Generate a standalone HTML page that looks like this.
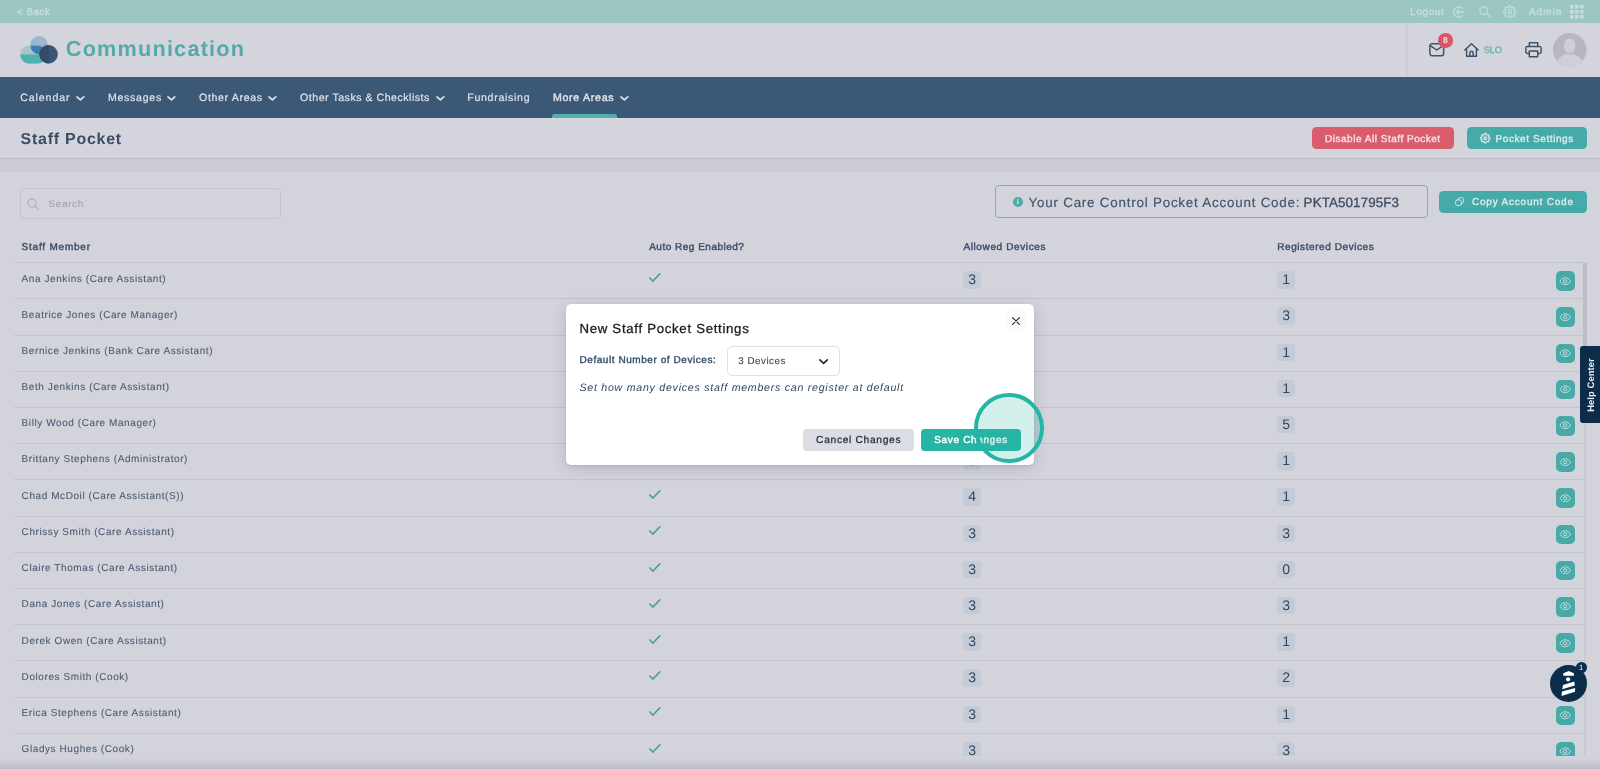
<!DOCTYPE html>
<html lang="en">
<head>
<meta charset="utf-8">
<title>Staff Pocket</title>
<style>
*{box-sizing:border-box;margin:0;padding:0}
html,body{width:1600px;height:769px;overflow:hidden}
body{background:#d3d3dc;font-family:"Liberation Sans",sans-serif;color:#44566b;position:relative;text-rendering:geometricPrecision}
#page{position:absolute;left:0;top:0;width:1600px;height:769px;overflow:hidden;will-change:transform}
.abs{position:absolute}
.t{position:absolute;white-space:nowrap;line-height:1}
svg{position:absolute;overflow:visible}
#topbar{left:0;top:0;width:1600px;height:22.5px;background:#9cc7c1}
#topbar .t{color:#c6dfdb;font-size:10.4px;top:6.2px;-webkit-text-stroke:.4px}
#topbar svg{fill:none;stroke:#c3deda;stroke-width:1.25;stroke-linecap:round;stroke-linejoin:round}
#header{left:0;top:22.5px;width:1600px;height:54.3px;background:#d4d4dc}
#header .sep{left:1406px;top:0;width:1.5px;height:54px;background:#cdcdd6}
#logo-t{left:65.8px;top:15.4px;font-size:22px;font-weight:bold;color:#55aaa8;letter-spacing:.98px}
#nav{left:0;top:76.8px;width:1600px;height:41.2px;background:#3b5876}
#nav .t{color:#dde2ea;font-size:11.6px;top:14.1px;-webkit-text-stroke:.2px}
#nav svg{fill:none;stroke:#dde2ea;stroke-width:1.9;stroke-linecap:round;stroke-linejoin:round;width:8.8px;height:4.7px;top:19.6px}
#nav .ul{left:552px;top:37.5px;width:64.7px;height:3.7px;background:#4fb1ad;border-radius:2.5px 2.5px 0 0}
#titlebar{left:0;top:118px;width:1600px;height:40.5px;background:#d4d4dc;border-bottom:1px solid #bcbcc7;border-top:1px solid #dadae4}
#titlebar h1{left:20.2px;top:11.9px;font-size:17.4px;font-weight:bold;color:#3a4d63}
#band{left:0;top:158.5px;width:1600px;height:13.5px;background:#cbcbd4}
.btn{position:absolute;border-radius:4.5px;height:22.2px}
.btn .t{color:#e6ebef;-webkit-text-stroke:.35px}
.btn svg{fill:none;stroke:#dcebeb;stroke-width:1.1;stroke-linecap:round;stroke-linejoin:round}
.red{background:#da5d6d}
.teal{background:#46aaa9}
.teal .t{color:#d9eeee}
.red .t{color:#f3e3e7}
#content{left:0;top:172px;width:1600px;height:597px;background:#d3d3dc}
#search{left:20px;top:16px;width:261px;height:31px;border:1px solid #c3c3cd;border-radius:4px}
#search .t{left:27px;top:9.5px;font-size:10.8px;color:#9a9ca8}
#search svg{left:6.3px;top:8.8px;width:12.4px;height:12.4px;fill:none;stroke:#aeb0ba;stroke-width:1.3;stroke-linecap:round}
#acct{left:994.5px;top:13.2px;width:433.2px;height:32.6px;border:1px solid #7fb0af;border-radius:4px}
#acct .t{color:#42546a;-webkit-text-stroke:.15px}
#acct .code{color:#3d4d61;-webkit-text-stroke:.3px}
#acct i{position:absolute;left:17.3px;top:10.8px;width:10px;height:10px;border-radius:50%;background:#4daaa8;color:#d8eceb;font:bold 7.5px/10px "Liberation Serif",serif;text-align:center}
.th{position:absolute;white-space:nowrap;line-height:1;top:69px;font-size:10.8px;color:#3f5168;-webkit-text-stroke:.45px}
#tablewrap{left:13.5px;top:172px;width:1573px;height:583.6px;overflow:hidden}
.row{position:absolute;left:0;width:1570px;height:36.2px;border-top:1px solid #c2c3cd}
.row .nm{left:8.1px;font-size:10.0px;letter-spacing:0.58px;color:#4c5c71;-webkit-text-stroke:.1px}
.chk{left:635.8px;top:9.9px;width:11.6px;height:9.6px;fill:none;stroke:#4d9f91;stroke-width:1.7;stroke-linecap:round;stroke-linejoin:round}
.nb{position:absolute;top:8px;width:18.2px;height:17.5px;border-radius:4px;background:#c4cbd7;color:#33475e;font-size:14px;line-height:17.5px;text-align:center}
.eye{position:absolute;left:1542.2px;top:8px;width:19.3px;height:19.7px;border-radius:4.8px;background:#48a9a7;box-shadow:0 0 0 .6px rgba(190,232,232,.55)}
.eye svg{left:3.55px;top:3.6px;width:12.4px;height:12.4px;fill:none;stroke:#bfe4e3;stroke-width:1.25}
#vbar{left:1570px;top:91px;width:2.8px;height:500px;background:#cacad4}
#vthumb{left:1569.9px;top:91px;width:3.3px;height:140px;background:#bcbcca}
#botfade{left:0;top:758px;width:1600px;height:11px;background:linear-gradient(to bottom,rgba(170,170,180,0),rgba(168,168,180,.5))}
#help{left:1580px;top:346px;width:20px;height:76.5px;background:#0b2d4a;border-radius:3px 0 0 3px}
#help .t{left:10.7px;top:38.5px;font-size:9.7px;font-weight:bold;letter-spacing:-.1px;color:#e8ecf0;transform:translate(-50%,-50%) rotate(-90deg)}
#beacon{left:1550px;top:665px;width:36.8px;height:36.8px;border-radius:50%;background:#0b2d4a}
#beacon svg{left:0;top:0;width:36.8px;height:36.8px}
#bbadge{left:1575.6px;top:661.8px;width:11px;height:11px;border-radius:50%;background:#0b2d4a;color:#fff;font-size:7.5px;text-align:center;line-height:11px}
#modal{left:565.8px;top:304px;width:468.5px;height:160.8px;background:#fff;border-radius:5px;box-shadow:0 3px 14px rgba(40,40,52,.17),0 1px 3px rgba(40,40,52,.08)}
#modal h2{left:13.5px;top:16px;font-size:15px;font-weight:normal;color:#1b1b1f;letter-spacing:-.15px;-webkit-text-stroke:.3px}
#modal .lbl{left:13.5px;top:50px;font-size:10.8px;color:#2f4c68;letter-spacing:.18px;-webkit-text-stroke:.35px}
#modal .hint{left:13.5px;top:77.5px;font-size:11.5px;font-style:italic;color:#2f4660;letter-spacing:.33px}
#sel{left:161.2px;top:42.2px;width:113px;height:29.6px;border:1px solid #e0e0e6;border-radius:5px}
#sel .t{color:#3b4757;-webkit-text-stroke:.12px}
#sel svg{left:91.5px;top:11.6px;width:9.2px;height:5.4px;fill:none;stroke:#2c2c2c;stroke-width:1.75;stroke-linecap:round;stroke-linejoin:round}
#xbtn{left:439px;top:5.9px;width:22px;height:22px;border-radius:50%;background:#fafafc}
#xbtn svg{left:7px;top:7px;width:8px;height:8px;stroke:#2a2a2e;stroke-width:1.2;stroke-linecap:round}
.mb{position:absolute;top:125.2px;height:21.8px;border-radius:4px}
.mb .t{top:5.5px;font-size:11px}
#cancel{left:236.8px;width:111.3px;background:#dcdce5}
#cancel .t{left:13.5px;color:#1f2b3a;letter-spacing:.2px;-webkit-text-stroke:.25px}
#save{left:355.2px;width:100px;background:#26b4a5}
#save .t{left:13.3px;top:5.9px;color:#fff;font-size:10.5px;letter-spacing:.4px;-webkit-text-stroke:.45px}
#ring{left:974.2px;top:393px;width:69.6px;height:69.6px;border-radius:50%;border:4.2px solid #26b4a5;background:rgba(38,180,165,.2)}
.m{-webkit-text-stroke:.25px}
.sb{-webkit-text-stroke:.45px}
</style>
</head>
<body>
<div id="page">
<div id="topbar" class="abs">
  <span class="t" style="left:16.8px;top:7.7px;font-size:9.8px;letter-spacing:0.59px">&lt; Back</span>
  <span class="t" style="left:1410.3px;top:7.7px;font-size:9.8px;letter-spacing:0.69px">Logout</span>
  <svg style="left:1452.5px;top:5.5px;width:12px;height:12px" viewBox="0 0 12 12"><path d="M9.6 2.2 A5.2 5.2 0 1 0 9.6 9.8"/><path d="M3.6 6 H10.6 M5.8 3.8 L3.6 6 L5.8 8.2"/></svg>
  <svg style="left:1478.5px;top:5.8px;width:12px;height:12px" viewBox="0 0 12 12"><circle cx="4.6" cy="4.6" r="3.8"/><path d="M7.5 7.5 L11.3 11.3"/></svg>
  <svg viewBox="0 0 24 24" style="left:1503px;top:5px;width:13.5px;height:13.5px;stroke-width:2.3"><circle cx="12" cy="12" r="3.2"/><path d="M19.4 15a1.65 1.65 0 0 0 .33 1.82l.06.06a2 2 0 1 1-2.83 2.83l-.06-.06a1.65 1.65 0 0 0-1.82-.33 1.65 1.65 0 0 0-1 1.51V21a2 2 0 0 1-4 0v-.09A1.65 1.65 0 0 0 9 19.4a1.65 1.65 0 0 0-1.82.33l-.06.06a2 2 0 1 1-2.83-2.83l.06-.06a1.65 1.65 0 0 0 .33-1.82 1.65 1.65 0 0 0-1.51-1H3a2 2 0 0 1 0-4h.09A1.65 1.65 0 0 0 4.600 9a1.65 1.65 0 0 0-.33-1.82l-.06-.06a2 2 0 1 1 2.83-2.83l.06.06a1.65 1.65 0 0 0 1.820.33H9a1.65 1.65 0 0 0 1-1.51V3a2 2 0 0 1 4 0v.09a1.65 1.65 0 0 0 1 1.510 1.65 1.65 0 0 0 1.820-.33l.06-.06a2 2 0 1 1 2.83 2.83l-.06.06a1.65 1.65 0 0 0-.33 1.82V9a1.65 1.65 0 0 0 1.510 1H21a2 2 0 0 1 0 4h-.09a1.65 1.65 0 0 0-1.51 1z"/></svg>
  <span class="t" style="left:1528.9px;top:7.7px;font-size:9.8px;letter-spacing:1.14px">Admin</span>
  <svg style="left:1570px;top:5px;width:13.5px;height:13.5px;stroke:none;fill:#c6dfdb" viewBox="0 0 13.5 13.5"><rect x="0" y="0" width="3.5" height="3.5"/><rect x="5" y="0" width="3.5" height="3.5"/><rect x="10" y="0" width="3.5" height="3.5"/><rect x="0" y="5" width="3.5" height="3.5"/><rect x="5" y="5" width="3.5" height="3.5"/><rect x="10" y="5" width="3.5" height="3.5"/><rect x="0" y="10" width="3.500" height="3.5"/><rect x="5" y="10" width="3.5" height="3.5"/><rect x="10" y="10" width="3.5" height="3.5"/></svg>
</div>
<div id="header" class="abs">
  <svg style="left:20px;top:12.5px;width:38px;height:29px" viewBox="0 0 38 29">
    <circle cx="19" cy="9.700" r="8.800" fill="#9fb6d0"/>
    <rect x="0.300" y="10.400" width="26.400" height="18.200" rx="9.100" fill="#a6c6cc"/>
    <path d="M0.300 19.500 H26.700 A9.100 9.100 0 0 1 17.600 28.600 H9.400 A9.100 9.100 0 0 1 0.300 19.500 Z" fill="#4fb1ad"/>
    <path d="M10.500 10.400 H17.600 A9.100 9.100 0 0 1 26.700 19.500 H20 A8.800 8.800 0 0 1 10.500 10.400 Z" fill="#3c7fb0"/>
    <circle cx="28.600" cy="19.300" r="9.200" fill="#3a5674"/>
    <path d="M28.600 10.100 A9.200 9.200 0 0 0 28.600 28.500 Z" fill="#344b66"/>
  </svg>
  <span id="logo-t" class="t" style="left:65.8px;top:15.3px;font-size:21.7px;letter-spacing:1.19px">Communication</span>
  <div class="sep abs"></div>
  <svg style="left:1428.500px;top:20.700px;width:15.500px;height:13.600px;fill:none;stroke:#3d5169;stroke-width:1.45;stroke-linejoin:round;stroke-linecap:round" viewBox="0 0 15.500 13.600"><rect x="0.850" y="0.850" width="13.800" height="11.900" rx="2.200"/><path d="M1.200 2.600 L7.750 7 L14.300 2.600"/></svg>
  <div class="abs" style="left:1438px;top:10.600px;width:14.500px;height:14.500px;border-radius:50%;background:#dd5668;color:#f3e4e8;font-size:8.500px;font-weight:bold;line-height:14.500px;text-align:center">8</div>
  <svg style="left:1464px;top:20px;width:15px;height:14px;fill:none;stroke:#3d5169;stroke-width:1.45;stroke-linejoin:round;stroke-linecap:round" viewBox="0 0 15 14"><path d="M0.800 7 L7.500 0.800 L14.200 7"/><path d="M2.600 5.600 V13.200 H12.400 V5.600"/><path d="M5.900 13.200 V9.800 A1.600 1.600 0 0 1 9.100 9.800 V13.200"/></svg>
  <span class="t" style="left:1483.8px;top:23.4px;font-size:9.2px;letter-spacing:-0.10px;color:#5cb0a9;-webkit-text-stroke:.25px">SLO</span>
  <svg style="left:1524.700px;top:19.500px;width:17px;height:15.600px;fill:none;stroke:#3d5169;stroke-width:1.45;stroke-linejoin:round;stroke-linecap:round" viewBox="0 0 17 15.600"><path d="M4.300 4.600 V0.850 H12.700 V4.600"/><path d="M4.300 11.600 H2.600 A1.750 1.750 0 0 1 0.850 9.850 V6.350 A1.750 1.750 0 0 1 2.600 4.600 H14.400 A1.750 1.750 0 0 1 16.150 6.350 V9.850 A1.750 1.750 0 0 1 14.400 11.600 H12.700"/><rect x="4.300" y="9" width="8.400" height="5.750"/></svg>
  <svg style="left:1553px;top:10.650px;width:33.600px;height:33.700px" viewBox="0 0 34 34"><defs><clipPath id="avc"><circle cx="17" cy="17" r="17"/></clipPath></defs><circle cx="17" cy="17" r="17" fill="#b7b7c1"/><g clip-path="url(#avc)" fill="#cfcfd8"><ellipse cx="16.900" cy="12.900" rx="5.700" ry="7.400"/><path d="M3.500 34 C3.500 26 8.500 22.600 14 21.200 C15.800 22 18 22 19.800 21.200 C25.500 22.600 30.500 26 30.500 34 Z"/></g></svg>
</div>
<div id="nav" class="abs">
  <span class="t" style="left:20.2px;top:16.4px;font-size:10.6px;letter-spacing:0.91px">Calendar</span><svg style="left:75.800px" viewBox="0 0 9 5"><path d="M0.900 0.900 L4.500 4.100 L8.100 0.900"/></svg>
  <span class="t" style="left:107.9px;top:16.4px;font-size:10.6px;letter-spacing:0.73px">Messages</span><svg style="left:167px" viewBox="0 0 9 5"><path d="M0.900 0.900 L4.500 4.100 L8.100 0.900"/></svg>
  <span class="t" style="left:199.1px;top:16.4px;font-size:10.6px;letter-spacing:0.64px">Other Areas</span><svg style="left:268px" viewBox="0 0 9 5"><path d="M0.900 0.900 L4.500 4.100 L8.100 0.900"/></svg>
  <span class="t" style="left:300.1px;top:16.4px;font-size:10.6px;letter-spacing:0.51px">Other Tasks &amp; Checklists</span><svg style="left:435.800px" viewBox="0 0 9 5"><path d="M0.900 0.900 L4.500 4.100 L8.100 0.900"/></svg>
  <span class="t" style="left:467.3px;top:16.4px;font-size:10.6px;letter-spacing:0.69px">Fundraising</span>
  <span class="t" style="left:552.9px;top:16.4px;font-size:10.6px;letter-spacing:0.73px;-webkit-text-stroke:.45px">More Areas</span><svg style="left:619.700px" viewBox="0 0 9 5"><path d="M0.900 0.900 L4.500 4.100 L8.100 0.900"/></svg>
  <div class="ul abs"></div>
</div>
<div id="titlebar" class="abs">
  <h1 class="t" style="left:20.6px;top:12.6px;font-size:15.9px;letter-spacing:0.79px">Staff Pocket</h1>
  <div class="btn red" style="left:1311.800px;top:8px;width:142px"><span class="t" style="left:13.2px;top:7.8px;font-size:10.0px;letter-spacing:0.52px">Disable All Staff Pocket</span></div>
  <div class="btn teal" style="left:1467px;top:8px;width:120px"><svg style="left:13px;top:6.2px;width:10.500px;height:10.500px;stroke-width:2.7" viewBox="0 0 24 24"><circle cx="12" cy="12" r="3.200"/><path d="M19.400 15a1.650 1.650 0 0 0 .33 1.820l.06.06a2 2 0 1 1-2.830 2.830l-.06-.06a1.650 1.650 0 0 0-1.820-.33 1.650 1.650 0 0 0-1 1.510V21a2 2 0 0 1-4 0v-.09A1.650 1.650 0 0 0 9 19.400a1.650 1.650 0 0 0-1.820.33l-.06.06a2 2 0 1 1-2.830-2.830l.06-.06a1.650 1.650 0 0 0 .33-1.820 1.650 1.650 0 0 0-1.510-1H3a2 2 0 0 1 0-4h.09A1.650 1.650 0 0 0 4.600 9a1.650 1.650 0 0 0-.33-1.820l-.06-.06a2 2 0 1 1 2.830-2.830l.06.06a1.650 1.650 0 0 0 1.820.33H9a1.650 1.650 0 0 0 1-1.510V3a2 2 0 0 1 4 0v.09a1.650 1.650 0 0 0 1 1.510 1.650 1.650 0 0 0 1.820-.33l.06-.06a2 2 0 1 1 2.830 2.830l-.06.06a1.650 1.650 0 0 0-.33 1.820V9a1.650 1.650 0 0 0 1.510 1H21a2 2 0 0 1 0 4h-.09a1.650 1.650 0 0 0-1.510 1z"/></svg><span class="t" style="left:28.5px;top:7.8px;font-size:10.0px;letter-spacing:0.59px">Pocket Settings</span></div>
</div>
<div id="band" class="abs"></div>
<div id="content" class="abs">
  <div id="search" class="abs"><svg viewBox="0 0 14 14"><circle cx="5.600" cy="5.600" r="4.600"/><path d="M9.200 9.200 L13 13"/></svg><span class="t" style="left:27.5px;top:11.0px;font-size:9.8px;letter-spacing:0.73px">Search</span></div>
  <div id="acct" class="abs"><i>i</i><span class="t" style="left:33.0px;top:10.2px;font-size:13.4px;letter-spacing:0.78px">Your Care Control Pocket Account Code:</span><span class="t code" style="left:308.1px;top:10.2px;font-size:13.4px;letter-spacing:0.10px">PKTA501795F3</span></div>
  <div class="btn teal" style="left:1438.500px;top:18.800px;width:148.2px;height:22.100px"><svg style="left:16.500px;top:6.300px;width:9.200px;height:9.200px;stroke-width:1.05;stroke:#cdeaea" viewBox="0 0 10 10"><rect x="0.600" y="3" width="6.400" height="6.400" rx="2.600"/><path d="M3 3 A2.600 2.600 0 0 1 5.600 0.600 H6.800 A2.600 2.600 0 0 1 9.400 3.200 V4.400 A2.600 2.600 0 0 1 7 7"/></svg><span class="t" style="left:33.5px;top:7.6px;font-size:10.0px;letter-spacing:0.79px">Copy Account Code</span></div>
  <span class="th" style="left:21.5px;top:70.7px;font-size:10.0px;letter-spacing:0.79px">Staff Member</span>
  <span class="th" style="left:649.2px;top:70.7px;font-size:10.0px;letter-spacing:0.50px">Auto Reg Enabled?</span>
  <span class="th" style="left:963.4px;top:70.7px;font-size:10.0px;letter-spacing:0.62px">Allowed Devices</span>
  <span class="th" style="left:1277.2px;top:70.7px;font-size:10.0px;letter-spacing:0.58px">Registered Devices</span>
</div>
<div id="tablewrap" class="abs">
<div class="row" style="top:90.1px"><span class="t nm" style="top:11.9px">Ana Jenkins (Care Assistant)</span><svg class="chk" viewBox="0 0 12 10"><path d="M0.8 5.2 L4.1 8.4 L11.2 0.9"/></svg><span class="nb" style="left:949.5px">3</span><span class="nb" style="left:1263.5px">1</span><span class="eye"><svg viewBox="0 0 16 16"><path d="M1.2 8 C3 4.9 5.4 3.6 8 3.6 C10.6 3.6 13 4.9 14.8 8 C13 11.1 10.6 12.4 8 12.4 C5.4 12.4 3 11.1 1.2 8 Z"/><circle cx="8" cy="8" r="2.1"/></svg></span></div>
<div class="row" style="top:126.3px"><span class="t nm" style="top:11.9px">Beatrice Jones (Care Manager)</span><span class="nb" style="left:1263.5px">3</span><span class="eye"><svg viewBox="0 0 16 16"><path d="M1.2 8 C3 4.9 5.4 3.6 8 3.6 C10.6 3.6 13 4.9 14.8 8 C13 11.1 10.6 12.4 8 12.4 C5.4 12.4 3 11.1 1.2 8 Z"/><circle cx="8" cy="8" r="2.1"/></svg></span></div>
<div class="row" style="top:162.5px"><span class="t nm" style="top:11.9px">Bernice Jenkins (Bank Care Assistant)</span><span class="nb" style="left:1263.5px">1</span><span class="eye"><svg viewBox="0 0 16 16"><path d="M1.2 8 C3 4.9 5.4 3.6 8 3.6 C10.6 3.6 13 4.9 14.8 8 C13 11.1 10.6 12.4 8 12.4 C5.4 12.4 3 11.1 1.2 8 Z"/><circle cx="8" cy="8" r="2.1"/></svg></span></div>
<div class="row" style="top:198.7px"><span class="t nm" style="top:10.9px">Beth Jenkins (Care Assistant)</span><span class="nb" style="left:1263.5px">1</span><span class="eye"><svg viewBox="0 0 16 16"><path d="M1.2 8 C3 4.9 5.4 3.6 8 3.6 C10.6 3.6 13 4.9 14.8 8 C13 11.1 10.6 12.4 8 12.4 C5.4 12.4 3 11.1 1.2 8 Z"/><circle cx="8" cy="8" r="2.1"/></svg></span></div>
<div class="row" style="top:234.9px"><span class="t nm" style="top:10.9px">Billy Wood (Care Manager)</span><span class="nb" style="left:1263.5px">5</span><span class="eye"><svg viewBox="0 0 16 16"><path d="M1.2 8 C3 4.9 5.4 3.6 8 3.6 C10.6 3.6 13 4.9 14.8 8 C13 11.1 10.6 12.4 8 12.4 C5.4 12.4 3 11.1 1.2 8 Z"/><circle cx="8" cy="8" r="2.1"/></svg></span></div>
<div class="row" style="top:271.1px"><span class="t nm" style="top:10.9px">Brittany Stephens (Administrator)</span><span class="nb" style="left:949.5px">3</span><span class="nb" style="left:1263.5px">1</span><span class="eye"><svg viewBox="0 0 16 16"><path d="M1.2 8 C3 4.9 5.4 3.6 8 3.6 C10.6 3.6 13 4.9 14.8 8 C13 11.1 10.6 12.4 8 12.4 C5.4 12.4 3 11.1 1.2 8 Z"/><circle cx="8" cy="8" r="2.1"/></svg></span></div>
<div class="row" style="top:307.3px"><span class="t nm" style="top:11.9px">Chad McDoil (Care Assistant(S))</span><svg class="chk" viewBox="0 0 12 10"><path d="M0.8 5.2 L4.1 8.4 L11.2 0.9"/></svg><span class="nb" style="left:949.5px">4</span><span class="nb" style="left:1263.5px">1</span><span class="eye"><svg viewBox="0 0 16 16"><path d="M1.2 8 C3 4.9 5.4 3.6 8 3.6 C10.6 3.6 13 4.9 14.8 8 C13 11.1 10.6 12.4 8 12.4 C5.4 12.4 3 11.1 1.2 8 Z"/><circle cx="8" cy="8" r="2.1"/></svg></span></div>
<div class="row" style="top:343.5px"><span class="t nm" style="top:11.9px">Chrissy Smith (Care Assistant)</span><svg class="chk" viewBox="0 0 12 10"><path d="M0.8 5.2 L4.1 8.4 L11.2 0.9"/></svg><span class="nb" style="left:949.5px">3</span><span class="nb" style="left:1263.5px">3</span><span class="eye"><svg viewBox="0 0 16 16"><path d="M1.2 8 C3 4.9 5.4 3.6 8 3.6 C10.6 3.6 13 4.9 14.8 8 C13 11.1 10.6 12.4 8 12.4 C5.4 12.4 3 11.1 1.2 8 Z"/><circle cx="8" cy="8" r="2.1"/></svg></span></div>
<div class="row" style="top:379.7px"><span class="t nm" style="top:10.9px">Claire Thomas (Care Assistant)</span><svg class="chk" viewBox="0 0 12 10"><path d="M0.8 5.2 L4.1 8.4 L11.2 0.9"/></svg><span class="nb" style="left:949.5px">3</span><span class="nb" style="left:1263.5px">0</span><span class="eye"><svg viewBox="0 0 16 16"><path d="M1.2 8 C3 4.9 5.4 3.6 8 3.6 C10.6 3.6 13 4.9 14.8 8 C13 11.1 10.6 12.4 8 12.4 C5.4 12.4 3 11.1 1.2 8 Z"/><circle cx="8" cy="8" r="2.1"/></svg></span></div>
<div class="row" style="top:415.9px"><span class="t nm" style="top:10.9px">Dana Jones (Care Assistant)</span><svg class="chk" viewBox="0 0 12 10"><path d="M0.8 5.2 L4.1 8.4 L11.2 0.9"/></svg><span class="nb" style="left:949.5px">3</span><span class="nb" style="left:1263.5px">3</span><span class="eye"><svg viewBox="0 0 16 16"><path d="M1.2 8 C3 4.9 5.4 3.6 8 3.6 C10.6 3.6 13 4.9 14.8 8 C13 11.1 10.6 12.4 8 12.4 C5.4 12.4 3 11.1 1.2 8 Z"/><circle cx="8" cy="8" r="2.1"/></svg></span></div>
<div class="row" style="top:452.1px"><span class="t nm" style="top:11.9px">Derek Owen (Care Assistant)</span><svg class="chk" viewBox="0 0 12 10"><path d="M0.8 5.2 L4.1 8.4 L11.2 0.9"/></svg><span class="nb" style="left:949.5px">3</span><span class="nb" style="left:1263.5px">1</span><span class="eye"><svg viewBox="0 0 16 16"><path d="M1.2 8 C3 4.9 5.4 3.6 8 3.6 C10.6 3.6 13 4.9 14.8 8 C13 11.1 10.6 12.4 8 12.4 C5.4 12.4 3 11.1 1.2 8 Z"/><circle cx="8" cy="8" r="2.1"/></svg></span></div>
<div class="row" style="top:488.3px"><span class="t nm" style="top:11.9px">Dolores Smith (Cook)</span><svg class="chk" viewBox="0 0 12 10"><path d="M0.8 5.2 L4.1 8.4 L11.2 0.9"/></svg><span class="nb" style="left:949.5px">3</span><span class="nb" style="left:1263.5px">2</span><span class="eye"><svg viewBox="0 0 16 16"><path d="M1.2 8 C3 4.9 5.4 3.6 8 3.6 C10.6 3.6 13 4.9 14.8 8 C13 11.1 10.6 12.4 8 12.4 C5.4 12.4 3 11.1 1.2 8 Z"/><circle cx="8" cy="8" r="2.1"/></svg></span></div>
<div class="row" style="top:524.5px"><span class="t nm" style="top:11.9px">Erica Stephens (Care Assistant)</span><svg class="chk" viewBox="0 0 12 10"><path d="M0.8 5.2 L4.1 8.4 L11.2 0.9"/></svg><span class="nb" style="left:949.5px">3</span><span class="nb" style="left:1263.5px">1</span><span class="eye"><svg viewBox="0 0 16 16"><path d="M1.2 8 C3 4.9 5.4 3.6 8 3.6 C10.6 3.6 13 4.9 14.8 8 C13 11.1 10.6 12.4 8 12.4 C5.4 12.4 3 11.1 1.2 8 Z"/><circle cx="8" cy="8" r="2.1"/></svg></span></div>
<div class="row" style="top:560.7px"><span class="t nm" style="top:10.9px">Gladys Hughes (Cook)</span><svg class="chk" viewBox="0 0 12 10"><path d="M0.8 5.2 L4.1 8.4 L11.2 0.9"/></svg><span class="nb" style="left:949.5px">3</span><span class="nb" style="left:1263.5px">3</span><span class="eye"><svg viewBox="0 0 16 16"><path d="M1.2 8 C3 4.9 5.4 3.6 8 3.6 C10.6 3.6 13 4.9 14.8 8 C13 11.1 10.6 12.4 8 12.4 C5.4 12.4 3 11.1 1.2 8 Z"/><circle cx="8" cy="8" r="2.1"/></svg></span></div>
<div id="vbar" class="abs"></div><div id="vthumb" class="abs"></div>
</div>
<div id="botfade" class="abs"></div>
<div id="help" class="abs"><span class="t" style="font-size:9.4px;letter-spacing:.1px">Help Center</span></div>
<div id="beacon" class="abs"><svg viewBox="0 0 36.8 36.8"><g fill="#fff"><path d="M18.6 5.9 L23.9 8.3 L24 10.8 H13.2 L13.4 8.3 Z"/><circle cx="18.1" cy="14.3" r="2.1"/><path d="M13 19.9 L24.2 16.600 L24.8 20.4 L12.3 24.2 Z"/><path d="M12 26.500 L25.2 22.900 L25 26.800 L11.500 31.100 Z"/></g></svg></div>
<div id="bbadge" class="abs">1</div>
<div id="modal" class="abs">
  <h2 class="t" style="left:13.7px;top:17.6px;font-size:13.2px;letter-spacing:0.71px">New Staff Pocket Settings</h2>
  <div id="xbtn" class="abs"><svg viewBox="0 0 8 8"><path d="M0.600 0.600 L7.400 7.400 M7.400 0.600 L0.600 7.400"/></svg></div>
  <span class="t lbl" style="left:13.7px;top:52.3px;font-size:10.0px;letter-spacing:0.56px">Default Number of Devices:</span>
  <div id="sel" class="abs"><span class="t" style="left:10.3px;top:9.9px;font-size:9.8px;letter-spacing:0.51px">3 Devices</span><svg viewBox="0 0 9.500 5.500"><path d="M0.900 0.900 L4.750 4.500 L8.600 0.900"/></svg></div>
  <span class="t hint" style="left:13.7px;top:79.0px;font-size:10.6px;letter-spacing:0.75px">Set how many devices staff members can register at default</span>
  <div id="cancel" class="mb"><span class="t" style="left:13.5px;top:6.6px;font-size:10.2px;letter-spacing:0.70px">Cancel Changes</span></div>
  <div id="save" class="mb"><span class="t" style="left:13.3px;top:6.4px;font-size:10.0px;letter-spacing:0.67px">Save Changes</span></div>
</div>
<div id="ring" class="abs"></div>
</div>
</body>
</html>
